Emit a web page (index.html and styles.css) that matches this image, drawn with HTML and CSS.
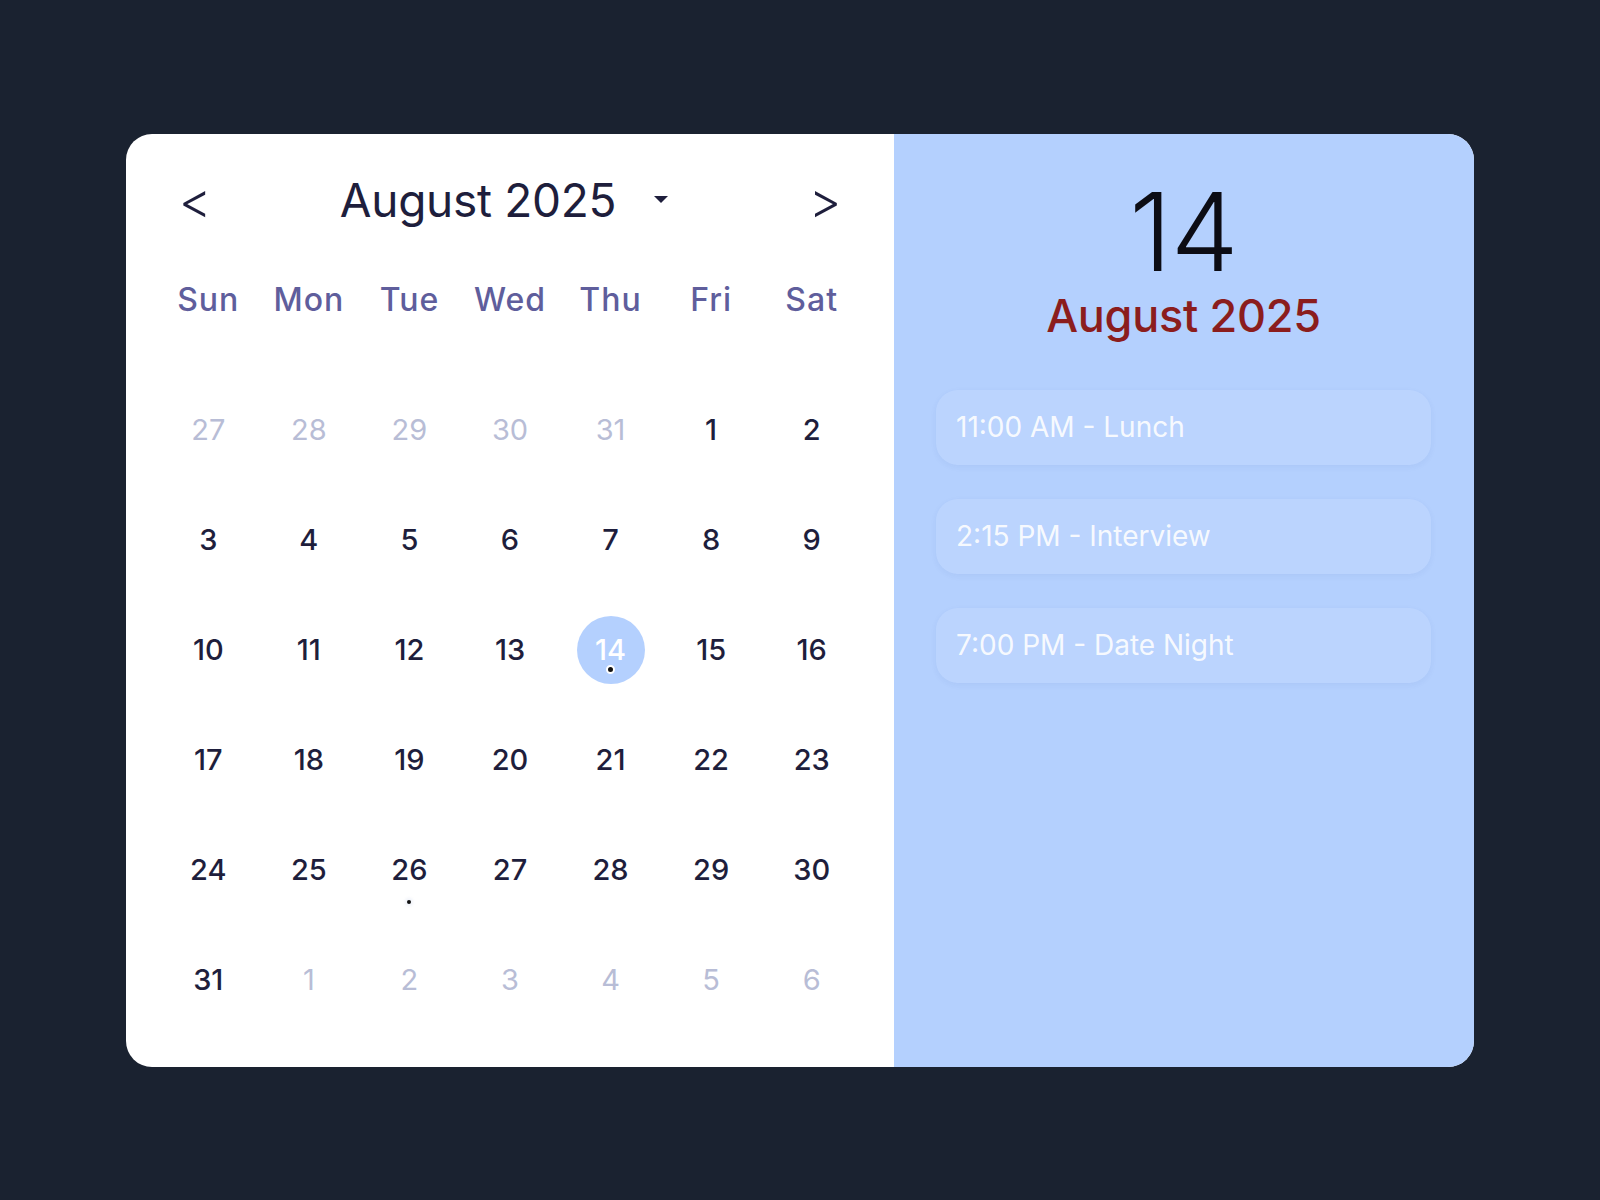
FILE: index.html
```html
<!DOCTYPE html>
<html lang="en">
<head>
    <meta charset="UTF-8">
    <meta name="viewport" content="width=device-width, initial-scale=1.0">
    <title>Calendar</title>
    <link rel="stylesheet" href="styles.css">
</head>
<body>
<div class="calendar">
    <div class="month-pane">
        <div class="month-header">
            <button class="nav-button">&lt;</button>
            <div class="month-title">
                <span>August 2025</span>
                <span class="caret"></span>
            </div>
            <button class="nav-button">&gt;</button>
        </div>

        <div class="weekdays">
            <div>Sun</div>
            <div>Mon</div>
            <div>Tue</div>
            <div>Wed</div>
            <div>Thu</div>
            <div>Fri</div>
            <div>Sat</div>
        </div>

        <div class="days">
            <div class="day muted"><span>27</span></div>
            <div class="day muted"><span>28</span></div>
            <div class="day muted"><span>29</span></div>
            <div class="day muted"><span>30</span></div>
            <div class="day muted"><span>31</span></div>
            <div class="day"><span>1</span></div>
            <div class="day"><span>2</span></div>

            <div class="day"><span>3</span></div>
            <div class="day"><span>4</span></div>
            <div class="day"><span>5</span></div>
            <div class="day"><span>6</span></div>
            <div class="day"><span>7</span></div>
            <div class="day"><span>8</span></div>
            <div class="day"><span>9</span></div>

            <div class="day"><span>10</span></div>
            <div class="day"><span>11</span></div>
            <div class="day"><span>12</span></div>
            <div class="day"><span>13</span></div>
            <div class="day selected"><span>14<i class="dot"></i></span></div>
            <div class="day"><span>15</span></div>
            <div class="day"><span>16</span></div>

            <div class="day"><span>17</span></div>
            <div class="day"><span>18</span></div>
            <div class="day"><span>19</span></div>
            <div class="day"><span>20</span></div>
            <div class="day"><span>21</span></div>
            <div class="day"><span>22</span></div>
            <div class="day"><span>23</span></div>

            <div class="day"><span>24</span></div>
            <div class="day"><span>25</span></div>
            <div class="day"><span>26<i class="dot"></i></span></div>
            <div class="day"><span>27</span></div>
            <div class="day"><span>28</span></div>
            <div class="day"><span>29</span></div>
            <div class="day"><span>30</span></div>

            <div class="day"><span>31</span></div>
            <div class="day muted"><span>1</span></div>
            <div class="day muted"><span>2</span></div>
            <div class="day muted"><span>3</span></div>
            <div class="day muted"><span>4</span></div>
            <div class="day muted"><span>5</span></div>
            <div class="day muted"><span>6</span></div>
        </div>
    </div>

    <div class="day-pane">
        <div class="day-number">14</div>
        <div class="day-month">August 2025</div>

        <ul class="events">
            <li class="event">11:00 AM - Lunch</li>
            <li class="event">2:15 PM - Interview</li>
            <li class="event">7:00 PM - Date Night</li>
        </ul>
    </div>
</div>
</body>
</html>
```

FILE: styles.css
```css
:root {
    --page: #1a2230;
    --ink: #1e1e3c;
    --weekday: #5f5e9c;
    --muted: #b8bdd6;
    --accent: #b4d0fe;
    --accent-red: #8b1d1d;
}

body {
    background: var(--page);
    font-family: 'Inter', 'Noto Sans', sans-serif;
    min-height: 100vh;
    display: flex;
    align-items: center;
    justify-content: center;
    margin: 0;
}

.calendar {
    width: 1348px;
    height: 933px;
    display: flex;
    background: #fff;
    border-radius: 26px;
    overflow: hidden;
}

/* left side: month grid */
.month-pane {
    width: 768px;
    padding: 32px;
    box-sizing: border-box;
    display: flex;
    flex-direction: column;
}

.month-header {
    height: 68px;
    margin-bottom: 6px;
    display: flex;
    align-items: center;
    justify-content: space-between;
}

.nav-button {
    width: 74px;
    height: 68px;
    border: none;
    background: none;
    font-family: inherit;
    font-size: 50px;
    font-weight: 300;
    color: var(--ink);
    cursor: pointer;
    padding: 0;
}

.month-title {
    display: flex;
    align-items: center;
    gap: 38px;
    padding-right: 12px;
    font-size: 46px;
    font-weight: 400;
    color: var(--ink);
    letter-spacing: -0.3px;
}

.caret {
    width: 0;
    height: 0;
    border-left: 7px solid transparent;
    border-right: 7px solid transparent;
    border-top: 7px solid var(--ink);
}

.weekdays {
    display: grid;
    grid-template-columns: repeat(7, 1fr);
    margin-top: 40px;
    height: 40px;
    align-items: center;
    text-align: center;
    font-size: 32px;
    font-weight: 500;
    color: var(--weekday);
    letter-spacing: 1px;
}

.days {
    flex: 1;
    margin-top: 55px;
    display: grid;
    grid-template-columns: repeat(7, 1fr);
    grid-template-rows: repeat(6, 1fr);
}

.day {
    display: flex;
    align-items: center;
    justify-content: center;
    font-size: 29px;
    font-weight: 500;
    color: var(--ink);
}

.day span {
    position: relative;
    width: 68px;
    height: 68px;
    border-radius: 50%;
    display: flex;
    align-items: center;
    justify-content: center;
}

.day.muted {
    color: var(--muted);
    font-weight: 400;
}

.day.selected span {
    background: var(--accent);
    color: #fff;
}

.dot {
    position: absolute;
    left: 50%;
    bottom: 0;
    width: 4px;
    height: 4px;
    margin-left: -2px;
    border-radius: 50%;
    background: #111;
    box-shadow: 0 0 3px 2px rgba(230, 235, 245, 0.6);
}

.day.selected .dot {
    bottom: 10px;
    width: 5px;
    height: 5px;
    margin-left: -4.5px;
    border: 2px solid #fff;
    box-shadow: none;
}

/* right side: selected day */
.day-pane {
    flex: 1;
    background: var(--accent);
    padding: 40px 43px 40px 42px;
    display: flex;
    flex-direction: column;
    align-items: center;
}

.day-number {
    font-size: 108px;
    font-weight: 300;
    line-height: 1;
    color: #0c0c14;
    margin-top: 4px;
    letter-spacing: -1px;
}

.day-month {
    font-size: 45px;
    font-weight: 500;
    color: var(--accent-red);
    letter-spacing: -0.3px;
    margin-top: 2px;
}

.events {
    list-style: none;
    margin: 47px 0 0;
    padding: 0;
    width: 100%;
    display: flex;
    flex-direction: column;
    gap: 34px;
}

.event {
    height: 75px;
    display: flex;
    align-items: center;
    padding: 0 20px;
    border-radius: 22px;
    background: rgba(255, 255, 255, 0.1);
    box-shadow: 0 2px 6px rgba(40, 70, 140, 0.06);
    color: rgba(255, 255, 255, 0.9);
    font-size: 28px;
}
```
